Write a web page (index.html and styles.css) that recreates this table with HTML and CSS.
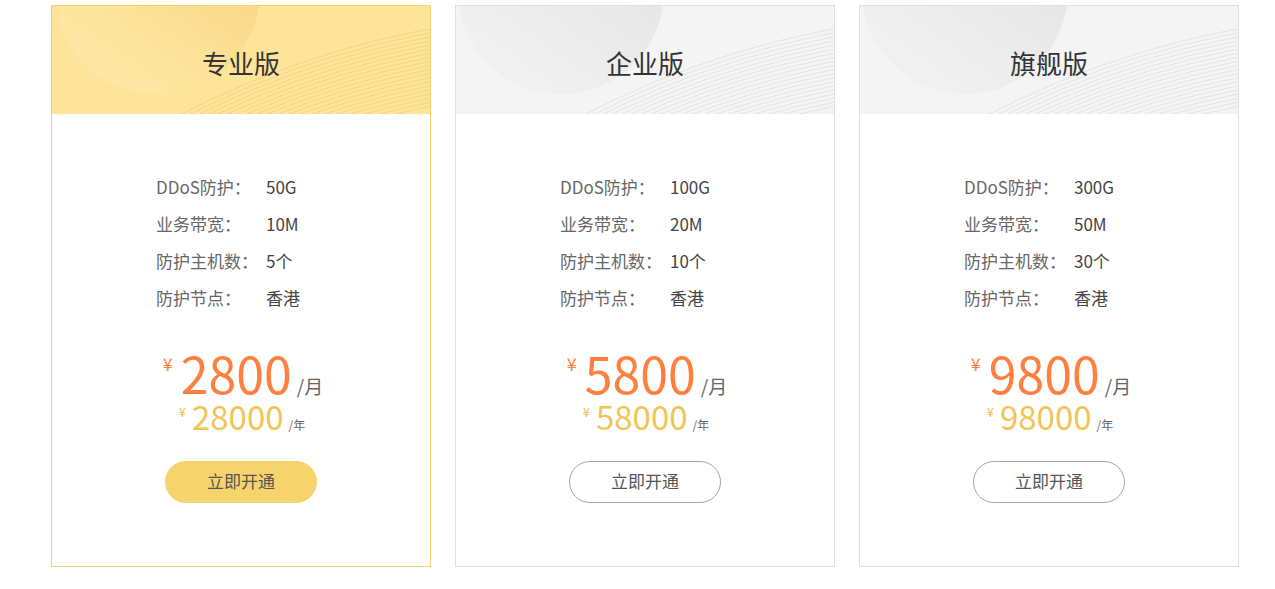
FILE: index.html
```html
<!DOCTYPE html>
<html lang="zh-CN">
<head>
    <meta charset="UTF-8">
    <meta name="viewport" content="width=device-width, initial-scale=1.0">
    <title>高防套餐</title>
    <link rel="stylesheet" href="styles.css">
</head>
<body>
    <svg class="defs" width="0" height="0">
        <symbol id="waves" viewBox="0 0 378 108">
            <g fill="none" stroke="currentColor" stroke-width="0.8">
                <circle cx="540" cy="900" r="892"/>
                <circle cx="540" cy="900" r="888"/>
                <circle cx="540" cy="900" r="884"/>
                <circle cx="540" cy="900" r="880"/>
                <circle cx="540" cy="900" r="876"/>
                <circle cx="540" cy="900" r="872"/>
                <circle cx="540" cy="900" r="868"/>
                <circle cx="540" cy="900" r="864"/>
                <circle cx="540" cy="900" r="860"/>
                <circle cx="540" cy="900" r="856"/>
                <circle cx="540" cy="900" r="852"/>
                <circle cx="540" cy="900" r="848"/>
                <circle cx="540" cy="900" r="844"/>
                <circle cx="540" cy="900" r="840"/>
                <circle cx="540" cy="900" r="836"/>
                <circle cx="540" cy="900" r="832"/>
                <circle cx="540" cy="900" r="828"/>
                <circle cx="540" cy="900" r="824"/>
                <circle cx="540" cy="900" r="820"/>
                <circle cx="540" cy="900" r="816"/>
            </g>
        </symbol>
    </svg>

    <div class="plans">
        <div class="plan plan-pro">
            <div class="plan-head">
                <span class="head-circle"></span>
                <svg class="head-waves"><use href="#waves"/></svg>
                <h2>专业版</h2>
            </div>
            <div class="plan-body">
                <ul class="specs">
                    <li><span class="spec-label">DDoS防护：</span><span class="spec-value">50G</span></li>
                    <li><span class="spec-label">业务带宽：</span><span class="spec-value">10M</span></li>
                    <li><span class="spec-label">防护主机数：</span><span class="spec-value">5个</span></li>
                    <li><span class="spec-label">防护节点：</span><span class="spec-value">香港</span></li>
                </ul>
                <div class="price-month">
                    <span class="yen">¥</span><span class="amount">2800</span><span class="unit">/月</span>
                </div>
                <div class="price-year">
                    <span class="yen">¥</span><span class="amount">28000</span><span class="unit">/年</span>
                </div>
                <a class="btn" href="#">立即开通</a>
            </div>
        </div>

        <div class="plan">
            <div class="plan-head">
                <span class="head-circle"></span>
                <svg class="head-waves"><use href="#waves"/></svg>
                <h2>企业版</h2>
            </div>
            <div class="plan-body">
                <ul class="specs">
                    <li><span class="spec-label">DDoS防护：</span><span class="spec-value">100G</span></li>
                    <li><span class="spec-label">业务带宽：</span><span class="spec-value">20M</span></li>
                    <li><span class="spec-label">防护主机数：</span><span class="spec-value">10个</span></li>
                    <li><span class="spec-label">防护节点：</span><span class="spec-value">香港</span></li>
                </ul>
                <div class="price-month">
                    <span class="yen">¥</span><span class="amount">5800</span><span class="unit">/月</span>
                </div>
                <div class="price-year">
                    <span class="yen">¥</span><span class="amount">58000</span><span class="unit">/年</span>
                </div>
                <a class="btn" href="#">立即开通</a>
            </div>
        </div>

        <div class="plan">
            <div class="plan-head">
                <span class="head-circle"></span>
                <svg class="head-waves"><use href="#waves"/></svg>
                <h2>旗舰版</h2>
            </div>
            <div class="plan-body">
                <ul class="specs">
                    <li><span class="spec-label">DDoS防护：</span><span class="spec-value">300G</span></li>
                    <li><span class="spec-label">业务带宽：</span><span class="spec-value">50M</span></li>
                    <li><span class="spec-label">防护主机数：</span><span class="spec-value">30个</span></li>
                    <li><span class="spec-label">防护节点：</span><span class="spec-value">香港</span></li>
                </ul>
                <div class="price-month">
                    <span class="yen">¥</span><span class="amount">9800</span><span class="unit">/月</span>
                </div>
                <div class="price-year">
                    <span class="yen">¥</span><span class="amount">98000</span><span class="unit">/年</span>
                </div>
                <a class="btn" href="#">立即开通</a>
            </div>
        </div>
    </div>
</body>
</html>
```

FILE: styles.css
```css
body {
    margin: 0;
    background-color: #fff;
    font-family: "Noto Sans CJK SC", "Noto Sans", sans-serif;
    color: #333;
}
.defs {
    position: absolute;
    width: 0;
    height: 0;
}
.plans {
    display: flex;
    gap: 24px;
    padding: 5px 0 0 51px;
}
.plan {
    width: 380px;
    box-sizing: border-box;
    border: 1px solid #e0e0e0;
    background-color: #fff;
}
.plan-pro {
    border-color: #f8d26a;
}
.plan-head {
    position: relative;
    height: 108px;
    overflow: hidden;
    background-color: #f4f4f4;
    color: #dedede;
    display: flex;
    align-items: center;
    justify-content: center;
}
.plan-pro .plan-head {
    background-color: #fee498;
    color: #f1cf7c;
}
.head-circle {
    position: absolute;
    left: 2px;
    top: -118px;
    width: 206px;
    height: 206px;
    border-radius: 50%;
    background: linear-gradient(35deg, #f0f0f0 20%, #e2e2e2 90%);
}
.plan-pro .head-circle {
    background: linear-gradient(35deg, #fee7a2 20%, #f7d17c 90%);
}
.head-waves {
    position: absolute;
    left: 0;
    top: 0;
    width: 378px;
    height: 108px;
}
.plan-head h2 {
    position: relative;
    margin: 0;
    padding-top: 4px;
    font-size: 26px;
    font-weight: 400;
    color: #333;
}
.plan-body {
    display: flex;
    flex-direction: column;
    align-items: center;
    padding: 54px 0 63px;
}
.specs {
    list-style: none;
    margin: 0;
    padding: 0 0 0 104px;
    align-self: stretch;
}
.specs li {
    display: flex;
    height: 37px;
    line-height: 37px;
    font-size: 17px;
}
.spec-label {
    width: 110px;
    color: #666;
}
.spec-value {
    color: #444;
}
.price-month {
    display: flex;
    align-items: baseline;
    margin: 31px 0 0 4px;
    height: 50px;
}
.price-month .yen {
    align-self: flex-start;
    margin: 7px 8px 0 0;
    font-size: 18px;
    line-height: 18px;
    color: #ff7f3f;
}
.price-month .amount {
    font-size: 50px;
    line-height: 50px;
    color: #ff7f3f;
}
.price-month .unit {
    margin-left: 5px;
    font-size: 19px;
    line-height: 19px;
    color: #666;
}
.price-year {
    display: flex;
    align-items: baseline;
    margin: 3px 0 0 2px;
    height: 33px;
}
.price-year .yen {
    align-self: flex-start;
    margin: 5px 6px 0 0;
    font-size: 13px;
    line-height: 13px;
    color: #f2bd4d;
}
.price-year .amount {
    font-size: 33px;
    line-height: 33px;
    color: #f1c458;
}
.price-year .unit {
    margin-left: 5px;
    font-size: 12px;
    line-height: 12px;
    color: #666;
}
.btn {
    display: flex;
    align-items: center;
    justify-content: center;
    box-sizing: border-box;
    width: 152px;
    height: 42px;
    margin-top: 28px;
    padding-bottom: 3px;
    border: 1px solid #a6a6a6;
    border-radius: 21px;
    font-size: 17px;
    color: #555;
    text-decoration: none;
}
.plan-pro .btn {
    border-color: #f7d46b;
    background-color: #f7d46b;
}
```
